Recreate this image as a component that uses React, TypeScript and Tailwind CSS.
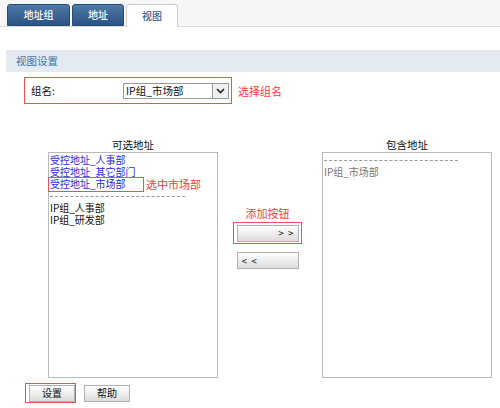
import React from "react";

const FONT = { fontFamily: '"Noto Sans CJK SC", "Liberation Sans", sans-serif' };

function Tab({ label, active, w }: { label: string; active?: boolean; w: number }) {
  return (
    <div
      style={{ width: w }}
      className={
        active
          ? "h-[23px] -mb-px flex items-center justify-center rounded-t-[3px] border border-b-0 border-[#cfcfcf] bg-white text-[10px] font-medium text-[#2d5f95]"
          : "h-[22px] flex items-center justify-center rounded-t-[3px] border border-[#274a72] bg-gradient-to-b from-[#4f79a6] to-[#2a5383] text-[10px] font-medium text-white"
      }
    >
      {label}
    </div>
  );
}

function GrayButton({ children, className = "" }: { children: React.ReactNode; className?: string }) {
  return (
    <div
      className={`h-[17px] flex items-center border border-[#b0b0b0] bg-gradient-to-b from-white to-[#dcdcdc] text-[10px] text-[#111] ${className}`}
    >
      {children}
    </div>
  );
}

export default function App() {
  return (
    <div style={FONT} className="w-[500px] h-[408px] bg-white overflow-hidden text-[10px] leading-[12px] text-[#111]">
      {/* tabs */}
      <div className="h-[27px] bg-[#f6f6f6] border-b border-[#dcdcdc] flex items-end gap-[2px] pl-[7px]">
        <Tab label="地址组" w={63} />
        <Tab label="地址" w={52} />
        <Tab label="视图" active w={52} />
      </div>

      {/* section header */}
      <div className="mt-[23px] ml-[6px] h-[22px] bg-[#e3eaf1] flex items-center pl-[10px] text-[#3a72aa] text-[10.5px]">
        视图设置
      </div>

      {/* group name row */}
      <div className="mt-[5px] flex items-center">
        <div className="ml-[24px] w-[208px] h-[27px] border border-[#f25050] flex items-center">
          <span className="ml-[6px] w-[92px] text-[10.5px]">组名:</span>
          <div className="w-[106px] h-[16px] border border-[#9a9a9a] flex items-center justify-between">
            <span className="pl-[2px] text-[10.5px]">IP组_市场部</span>
            <div className="w-[16px] h-[14px] border-l border-[#9a9a9a] bg-[#f0f0f0] flex items-center justify-center">
              <svg width="9" height="6" viewBox="0 0 9 6">
                <path d="M1 1 L4.5 4.5 L8 1" fill="none" stroke="#222" strokeWidth="1.6" />
              </svg>
            </div>
          </div>
        </div>
        <span className="ml-[6px] text-[#f23c3c] text-[11px]">选择组名</span>
      </div>

      {/* lists */}
      <div className="mt-[34px] flex pl-[48px]">
        <div className="w-[170px] flex flex-col">
          <div className="h-[14px] text-center leading-[14px] text-[10.5px]">可选地址</div>
          <div className="h-[226px] border border-[#b9b9b9] pt-[1px] pl-px relative">
            <div className="text-[#2b2bd6]">受控地址_人事部</div>
            <div className="text-[#2b2bd6]">受控地址_其它部门</div>
            <div className="flex items-center">
              <div className="border border-[#f25050] -ml-[2px] w-[96px] h-[15px] -my-[1.5px] pl-[1px] text-[#2b2bd6] leading-[12px]">
                受控地址_市场部
              </div>
              <span className="ml-[2px] text-[#f23c3c] text-[11px]">选中市场部</span>
            </div>
            <div className="h-[12px] flex items-center">
              <div className="w-[135px] border-t border-dashed border-[#999]" />
            </div>
            <div>IP组_人事部</div>
            <div>IP组_研发部</div>
          </div>
        </div>

        <div className="ml-[15px] w-[69px] flex flex-col items-center pt-[68px]">
          <div className="text-[#f23c3c] text-[11px] h-[14px] leading-[14px]">添加按钮</div>
          <div className="mt-[2px] w-[69px] h-[22px] border border-[#f25050] flex items-center justify-center">
            <GrayButton className="w-[62px] justify-end pr-[3px] tracking-[1px]">{"> >"}</GrayButton>
          </div>
          <GrayButton className="mt-[8px] w-[62px] justify-start pl-[4px] tracking-[1px]">{"< <"}</GrayButton>
        </div>

        <div className="ml-[20px] w-[170px] flex flex-col">
          <div className="h-[14px] text-center leading-[14px] text-[10.5px]">包含地址</div>
          <div className="h-[226px] border border-[#b9b9b9] pt-[1px] pl-px text-[#777]">
            <div className="h-[12px] flex items-center">
              <div className="w-[134px] border-t border-dashed border-[#999]" />
            </div>
            <div>IP组_市场部</div>
          </div>
        </div>
      </div>

      {/* bottom buttons */}
      <div className="mt-[5px] ml-[25px] flex items-center">
        <div className="w-[51px] h-[20px] border border-[#f25050] flex items-center pl-[3px]">
          <GrayButton className="w-[46px] h-[16px] justify-center">设置</GrayButton>
        </div>
        <GrayButton className="ml-[8px] w-[46px] h-[16px] justify-center">帮助</GrayButton>
      </div>
    </div>
  );
}
